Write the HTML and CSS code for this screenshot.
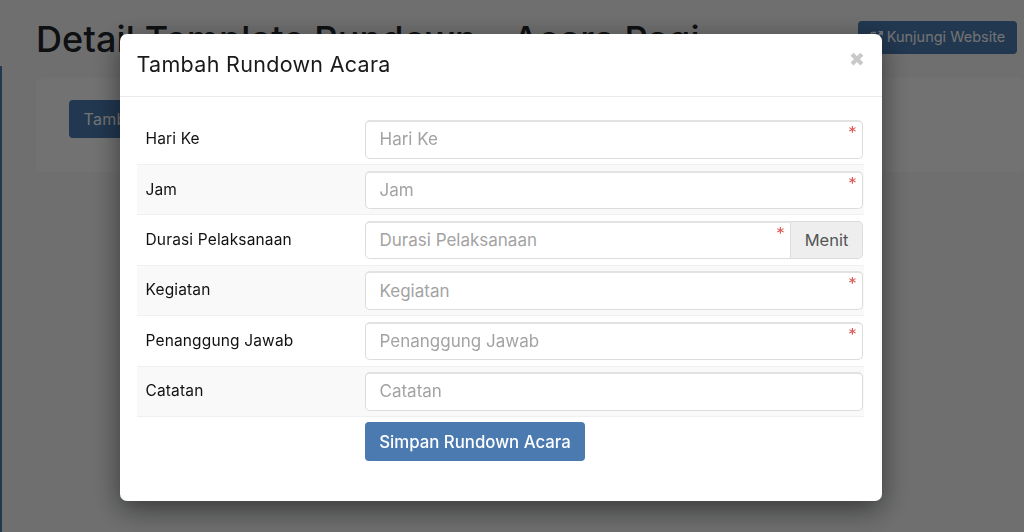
FILE: index.html
```html
<!DOCTYPE html>
<html lang="id">
<head>
<meta charset="utf-8">
<title>Tambah Rundown Acara</title>
<link rel="stylesheet" href="styles.css">
</head>
<body>
<div class="page">
  <aside class="rail"></aside>
  <main class="main">
    <header class="topbar">
      <h1 class="page-title">Detail Template Rundown - Acara Pagi</h1>
      <a class="btn btn-visit">
        <svg class="ext-icon" viewBox="0 0 14 14" width="14" height="14" aria-hidden="true"><path d="M6 2.500H2.500a1.500 1.500 0 0 0-1.500 1.500v7.500A1.500 1.500 0 0 0 2.500 13H10a1.500 1.500 0 0 0 1.500-1.500V8" fill="none" stroke="currentColor" stroke-width="1.300"/><path d="M8 1h5v5l-1.800-1.800-4.700 4.700-1.400-1.400 4.700-4.700z" fill="currentColor"/></svg>
        Kunjungi Website
      </a>
    </header>
    <section class="card">
      <a class="btn btn-add">Tambah Rundown Acara</a>
    </section>
  </main>
</div>
<div class="backdrop"></div>
<div class="modal-layer">
  <div class="modal">
    <div class="modal-header">
      <h2 class="modal-title">Tambah Rundown Acara</h2>
      <span class="close">✖</span>
    </div>
    <form class="modal-body">
      <div class="row">
        <label class="row-label">Hari Ke</label>
        <div class="field"><input class="input" placeholder="Hari Ke"><span class="req">*</span></div>
      </div>
      <div class="row row-alt">
        <label class="row-label">Jam</label>
        <div class="field"><input class="input" placeholder="Jam"><span class="req">*</span></div>
      </div>
      <div class="row">
        <label class="row-label">Durasi Pelaksanaan</label>
        <div class="field group">
          <div class="group-main"><input class="input input-left" placeholder="Durasi Pelaksanaan"><span class="req">*</span></div>
          <span class="addon">Menit</span>
        </div>
      </div>
      <div class="row row-alt">
        <label class="row-label">Kegiatan</label>
        <div class="field"><input class="input" placeholder="Kegiatan"><span class="req">*</span></div>
      </div>
      <div class="row">
        <label class="row-label">Penanggung Jawab</label>
        <div class="field"><input class="input" placeholder="Penanggung Jawab"><span class="req">*</span></div>
      </div>
      <div class="row row-alt">
        <label class="row-label">Catatan</label>
        <div class="field"><input class="input" placeholder="Catatan"></div>
      </div>
      <div class="actions">
        <button type="button" class="btn btn-save">Simpan Rundown Acara</button>
      </div>
    </form>
  </div>
</div>
</body>
</html>
```
FILE: styles.css
```css
* { box-sizing: border-box; }
html, body { margin: 0; height: 100%; overflow: hidden; }
body { font-family: "Inter", "Liberation Sans", sans-serif; background: #f5f6f7; color: #212529; }

.page { display: flex; height: 532px; }
.rail { width: 2px; margin-top: 66px; background: #4a7cb2; flex: none; }
.main { flex: 1; padding: 21px 7px 0 34px; min-width: 0; }
.topbar { display: flex; justify-content: space-between; align-items: flex-start; height: 57px; }
.page-title { margin: 0; font-size: 36px; font-weight: 500; line-height: 36px; letter-spacing: 0.14px; white-space: nowrap; }
.btn { display: inline-flex; align-items: center; justify-content: center; background: #4a7ab0; color: #fff; border: 0; border-radius: 4px; font-family: inherit; }
.btn-visit { width: 159px; height: 33px; gap: 3px; padding-bottom: 2px; background: #4a7cb2; font-size: 14.500px; }
.ext-icon { flex: none; }
.card { height: 94px; margin-right: -7px; background: #fcfcfc; border-radius: 6px; padding: 22px 33px; }
.btn-add { height: 38px; padding: 0 14.500px; background: #4a7cb2; font-size: 16px; letter-spacing: 0.3px; }

.backdrop { position: fixed; inset: 0; background: rgba(0, 0, 0, 0.55); }
.modal-layer { position: fixed; inset: 0; padding: 34px 142px 31px 120px; }
.modal { height: 467px; background: #fff; border-radius: 7px; box-shadow: 0 8px 28px rgba(0, 0, 0, 0.5); }
.modal-header { display: flex; justify-content: space-between; height: 63px; padding: 0 17px 0 16.500px; border-bottom: 1px solid #ebebeb; }
.modal-title { margin: 0; font-size: 21.500px; font-weight: 400; line-height: 61px; color: #1a1a1a; letter-spacing: 0.3px; }
.close { color: #c9c9c9; font-size: 19px; line-height: 51px; }
.modal-body { padding: 17.600px 17px 0 16.500px; }
.row { display: flex; height: 50.400px; padding: 5.600px 0 0 9px; border-bottom: 1px solid #f0f0f0; width: 727px; }
.row-alt { background: #f9f9f9; }
.row-label { width: 219.500px; flex: none; font-size: 15.500px; line-height: 38px; color: #111; letter-spacing: 0.15px; }
.field { position: relative; width: 498px; height: 38.400px; }
.input { display: block; width: 100%; height: 100%; padding: 0 13.500px 1px; background: #fff; border: 1px solid #dcdcdc; border-top-width: 2px; border-top-color: #e2e2e2; border-radius: 5px; font-family: inherit; font-size: 17px; color: #333; outline: 0; }
.input::placeholder { color: #a3a3a3; opacity: 1; }
.input-left { border-radius: 5px 0 0 5px; }
.req { position: absolute; top: 1px; right: 7px; color: #dc5f5b; font-family: "DejaVu Sans", sans-serif; font-weight: 700; font-size: 14px; line-height: 20px; }
.group { display: flex; }
.group-main { position: relative; flex: 1; }
.addon { width: 72px; flex: none; display: flex; align-items: center; justify-content: center; background: #eeeeee; border: 1px solid #dcdcdc; border-left: 0; border-radius: 0 5px 5px 0; font-size: 16.500px; color: #555; }
.actions { padding: 5.500px 0 0 228.500px; }
.btn-save { width: 220px; height: 39px; font-size: 16.800px; font-weight: 500; }
```
